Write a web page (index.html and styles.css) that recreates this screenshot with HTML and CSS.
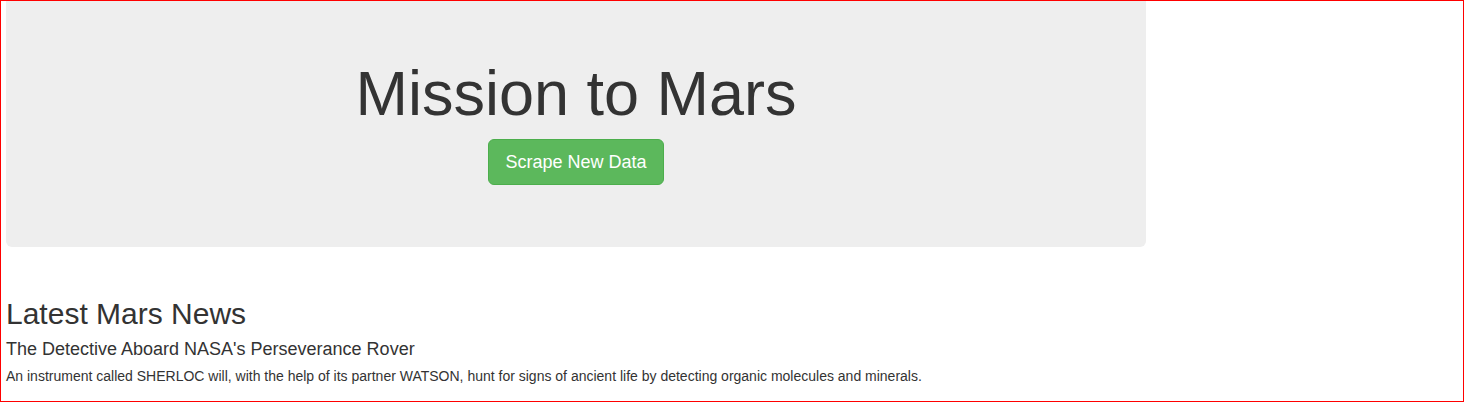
FILE: index.html
```html
<!DOCTYPE html>
<html lang="en">
<head>
<meta charset="utf-8">
<title>Mission to Mars</title>
<link rel="stylesheet" href="styles.css">
</head>
<body>
<div class="frame">
  <div class="jumbotron">
    <h1 class="title">Mission to Mars</h1>
    <a class="btn-scrape" href="#">Scrape New Data</a>
  </div>
  <section class="news">
    <h2 class="news-heading">Latest Mars News</h2>
    <h4 class="news-title">The Detective Aboard NASA's Perseverance Rover</h4>
    <p class="news-teaser">An instrument called SHERLOC will, with the help of its partner WATSON, hunt for signs of ancient life by detecting organic molecules and minerals.</p>
  </section>
</div>
</body>
</html>
```

FILE: styles.css
```css
html, body {
  margin: 0;
  padding: 0;
  background: #fff;
}

body {
  font-family: "Liberation Sans", Arial, Helvetica, sans-serif;
  color: #333;
}

.frame {
  box-sizing: border-box;
  width: 1464px;
  height: 402px;
  border: 1px solid #ff0000;
  overflow: hidden;
  display: flex;
  flex-direction: column;
  align-items: flex-start;
}

.jumbotron {
  box-sizing: border-box;
  width: 1140px;
  height: 246px;
  margin-left: 5px;
  padding-top: 58px;
  background: #eeeeee;
  border-radius: 0 0 6px 6px;
  display: flex;
  flex-direction: column;
  align-items: center;
}

.title {
  margin: 0 0 10px;
  font-size: 63px;
  line-height: 1.1;
  font-weight: 400;
  color: #333;
}

.btn-scrape {
  box-sizing: border-box;
  display: inline-block;
  height: 46px;
  padding: 10px 16px;
  font-size: 18px;
  line-height: 24px;
  color: #fff;
  text-decoration: none;
  background: #5cb85c;
  border: 1px solid #4cae4c;
  border-radius: 6px;
  margin-top: 1px;
}

.news {
  margin-left: 5px;
}

.news-heading {
  margin: 50px 0 0;
  font-size: 30px;
  line-height: 33px;
  font-weight: 400;
}

.news-title {
  margin: 10px 0 0;
  font-size: 18px;
  line-height: 19.8px;
  font-weight: 400;
}

.news-teaser {
  margin: 6px 0 0;
  font-size: 14px;
  line-height: 20px;
}
```
